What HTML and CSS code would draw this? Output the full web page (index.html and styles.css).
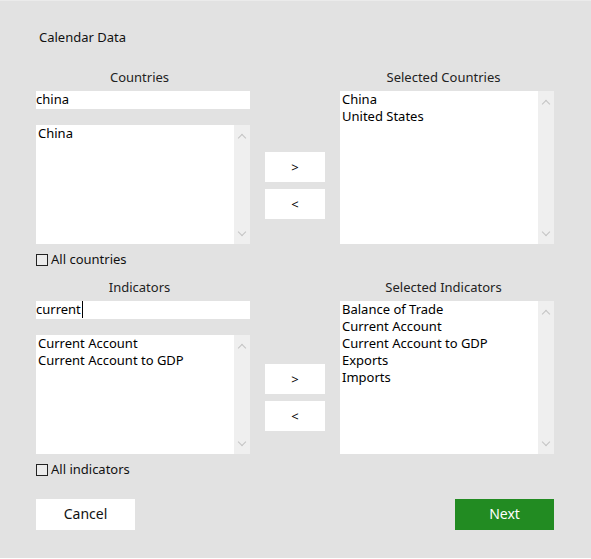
FILE: index.html
```html
<!DOCTYPE html>
<html>
<head>
<meta charset="utf-8">
<link rel="stylesheet" href="styles.css">
</head>
<body>
<div class="dialog">
  <div class="title">Calendar Data</div>

  <div class="section sec-countries">
    <div class="col left">
      <div class="label">Countries</div>
      <div class="input">china</div>
      <div class="list short">
        <div class="items"><div>China</div></div>
        <div class="scroll"><span class="chev up"></span><span class="chev down"></span></div>
      </div>
      <div class="check"><span class="box"></span>All countries</div>
    </div>
    <div class="col mid">
      <div class="btn">&gt;</div>
      <div class="btn">&lt;</div>
    </div>
    <div class="col right">
      <div class="label">Selected Countries</div>
      <div class="list tall">
        <div class="items"><div>China</div><div>United States</div></div>
        <div class="scroll"><span class="chev up"></span><span class="chev down"></span></div>
      </div>
    </div>
  </div>

  <div class="section sec-indicators">
    <div class="col left">
      <div class="label">Indicators</div>
      <div class="input">current<span class="caret"></span></div>
      <div class="list short">
        <div class="items"><div>Current Account</div><div>Current Account to GDP</div></div>
        <div class="scroll"><span class="chev up"></span><span class="chev down"></span></div>
      </div>
      <div class="check"><span class="box"></span>All indicators</div>
    </div>
    <div class="col mid">
      <div class="btn">&gt;</div>
      <div class="btn">&lt;</div>
    </div>
    <div class="col right">
      <div class="label">Selected Indicators</div>
      <div class="list tall">
        <div class="items"><div>Balance of Trade</div><div>Current Account</div><div>Current Account to GDP</div><div>Exports</div><div>Imports</div></div>
        <div class="scroll"><span class="chev up"></span><span class="chev down"></span></div>
      </div>
    </div>
  </div>

  <div class="footer">
    <div class="action cancel">Cancel</div>
    <div class="action next">Next</div>
  </div>
</div>
</body>
</html>
```
FILE: styles.css
```css
html, body {
  margin: 0;
  padding: 0;
  background: #ffffff;
}
body {
  font-family: "Noto Sans", "Open Sans", sans-serif;
  font-size: 13px;
  color: #000;
}
.dialog {
  box-sizing: border-box;
  height: 558px;
  background: #e2e2e2;
  border-top: 1px solid #ebebeb;
  padding: 0 37px 0 36px;
}
.title {
  margin-left: 3px;
  padding-top: 27px;
  line-height: 18px;
  height: 18px;
  color: #111;
}
.section {
  display: flex;
  gap: 15px;
}
.sec-countries { margin-top: 22px; }
.sec-indicators { margin-top: 11px; }
.col { display: flex; flex-direction: column; }
.left, .right { width: 214px; }
.mid { width: 60px; }
.label {
  text-align: center;
  line-height: 18px;
  height: 23px;
  padding-right: 7px;
  color: #222;
}
.input {
  height: 18px;
  line-height: 16px;
  background: #fff;
  margin-bottom: 16px;
  display: flex;
  align-items: flex-start;
}
.caret {
  display: inline-block;
  width: 1px;
  height: 17px;
  background: #000;
  margin-left: 1px;
}
.list {
  background: #fff;
  display: flex;
}
.list.short { height: 119px; }
.list.tall { height: 153px; }
.items {
  flex: 1;
  padding: 0 2px;
  line-height: 17px;
}
.scroll {
  width: 16px;
  background: #efefef;
  position: relative;
}
.chev {
  position: absolute;
  left: 5px;
  width: 5px;
  height: 5px;
  border-left: 1px solid #c3c3c3;
  border-top: 1px solid #c3c3c3;
}
.chev.up { top: 10px; transform: rotate(45deg); }
.chev.down { bottom: 9px; transform: rotate(225deg); }
.check {
  margin-top: 6px;
  display: flex;
  align-items: center;
  line-height: 16px;
  height: 17px;
  color: #111;
}
.box {
  box-sizing: border-box;
  width: 12px;
  height: 12px;
  border: 1px solid #222;
  background: #ececec;
  margin-right: 3px;
  margin-top: 2px;
}
.mid { padding-top: 84px; gap: 7px; }
.sec-indicators .mid { padding-top: 86px; }
.btn {
  height: 30px;
  background: #fff;
  display: flex;
  align-items: center;
  justify-content: center;
  line-height: 1;
}
.footer {
  display: flex;
  justify-content: space-between;
  margin-top: 22px;
}
.action {
  width: 99px;
  height: 31px;
  display: flex;
  align-items: center;
  justify-content: center;
  font-size: 14px;
  line-height: 18px;
  padding-bottom: 2px;
  box-sizing: border-box;
}
.cancel { background: #fff; color: #111; }
.next { background: #228b22; color: #fff; }
```
